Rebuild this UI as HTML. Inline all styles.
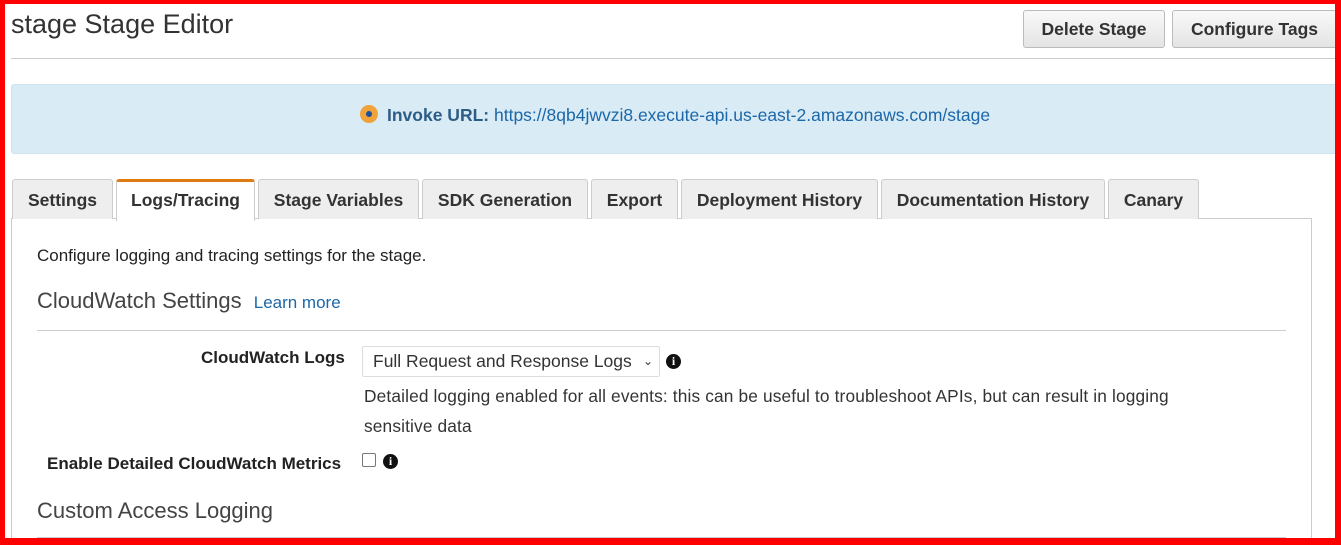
<!DOCTYPE html>
<html style="width:1341px;height:545px;overflow:hidden"><head><style>
*{box-sizing:border-box;margin:0;padding:0}
body{width:1341px;height:545px;overflow:hidden;background:#fff;font-family:"Liberation Sans",Arial,sans-serif;color:#222;position:relative}
.frame{position:absolute;left:0;top:0;width:1341px;height:545px;border:solid red;border-width:4px 6px 7px 5px;z-index:10;pointer-events:none}
.a{position:absolute;white-space:nowrap}
.btn{position:absolute;top:10px;height:38px;border:1px solid #bbb;border-radius:3px;background:linear-gradient(#f9f9f9,#e4e4e4);font-weight:bold;font-size:17.5px;color:#333;text-align:center;line-height:36px}
.tab{position:absolute;top:179px;height:40px;border:1px solid #ccc;border-bottom:none;background:#eee;font-weight:bold;font-size:17.5px;color:#333;text-align:center;line-height:40px;border-radius:3px 3px 0 0}
.info{display:inline-block;width:15px;height:15px;border-radius:50%;background:#111;color:#fff;font:bold 12px "Liberation Serif",serif;text-align:center;line-height:15px;position:absolute}
</style></head><body>
<div class="frame"></div>
<div class="a" style="left:11px;top:9px;font-size:27px;color:#333">stage Stage Editor</div>
<div class="btn" style="left:1023px;width:142px">Delete Stage</div>
<div class="btn" style="left:1172px;width:165px">Configure Tags</div>
<div class="a" style="left:11px;top:58px;width:1330px;height:1px;background:#ccc"></div>
<div class="a" style="left:11px;top:84px;width:1326px;height:70px;background:#d9ebf5;border:1px solid #cfe3ee;border-radius:3px"></div>
<div class="a" style="left:360px;top:105px;width:18px;height:18px;border-radius:50%;background:#f0a23b"></div>
<div class="a" style="left:366px;top:111px;width:6px;height:6px;border-radius:50%;background:#1d4f9a"></div>
<div class="a" style="left:387px;top:105px;font-size:17.5px;color:#2b5f8a"><b style="color:#2d5d86">Invoke URL:</b> <span style="color:#1c67a8">https://8qb4jwvzi8.execute-api.us-east-2.amazonaws.com/stage</span></div>
<div class="a" style="left:11px;top:218px;width:1301px;height:327px;border:1px solid #ccc;border-bottom:none"></div>
<div class="tab" style="left:12px;width:101px">Settings</div>
<div class="tab" style="left:116px;width:139px;background:#fff;border-top:3px solid #e07b11;height:42px;line-height:36px;z-index:2">Logs/Tracing</div>
<div class="tab" style="left:258px;width:161px">Stage Variables</div>
<div class="tab" style="left:422px;width:166px">SDK Generation</div>
<div class="tab" style="left:591px;width:87px">Export</div>
<div class="tab" style="left:681px;width:197px">Deployment History</div>
<div class="tab" style="left:881px;width:224px">Documentation History</div>
<div class="tab" style="left:1108px;width:91px">Canary</div>
<div class="a" style="left:37px;top:246px;font-size:17px">Configure logging and tracing settings for the stage.</div>
<div class="a" style="left:37px;top:288px;font-size:22px;color:#444">CloudWatch Settings <span style="font-size:17px;color:#1c67a8;margin-left:6px">Learn more</span></div>
<div class="a" style="left:37px;top:330px;width:1249px;height:1px;background:#ccc"></div>
<div class="a" style="left:201px;top:348px;font-size:17px;font-weight:bold">CloudWatch Logs</div>
<div class="a" style="left:362px;top:346px;width:298px;height:31px;border:1px solid #ddd;border-radius:2px;font-size:17.5px;color:#333;line-height:29px;padding-left:10px">Full Request and Response Logs <span style="position:absolute;right:6px;font-size:12px">&#8964;</span></div>
<span class="info" style="left:666px;top:354px">i</span>
<div class="a" style="left:364px;top:381px;font-size:17.3px;line-height:30px;color:#333;letter-spacing:0.15px">Detailed logging enabled for all events: this can be useful to troubleshoot APIs, but can result in logging<br>sensitive data</div>
<div class="a" style="left:47px;top:454px;font-size:17px;font-weight:bold">Enable Detailed CloudWatch Metrics</div>
<div class="a" style="left:362px;top:453px;width:14px;height:14px;border:1px solid #777;border-radius:2px"></div>
<span class="info" style="left:383px;top:454px">i</span>
<div class="a" style="left:37px;top:498px;font-size:22px;color:#444">Custom Access Logging</div>
<div class="a" style="left:37px;top:537px;width:1249px;height:1px;background:#ccc"></div>
</body></html>
